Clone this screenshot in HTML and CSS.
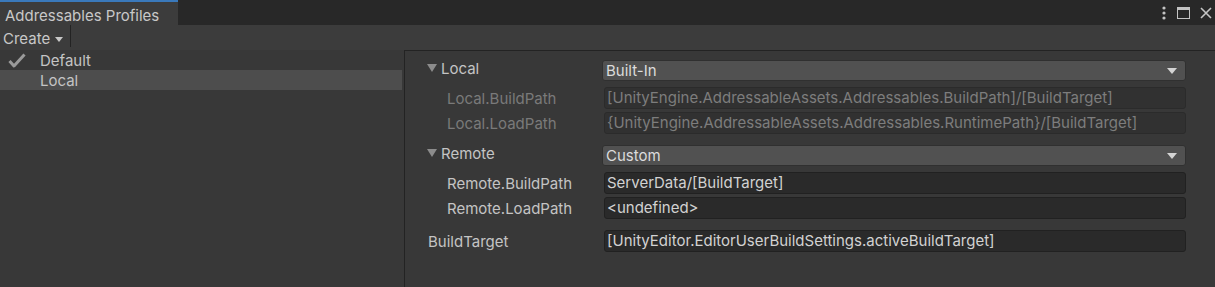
FILE: index.html
```html
<!DOCTYPE html>
<html lang="en">
<head>
    <meta charset="UTF-8">
    <title>Addressables Profiles</title>
    <link rel="stylesheet" href="styles.css">
</head>
<body>
    <div class="tabbar">
        <div class="tab">Addressables Profiles</div>
        <div class="window-icons">
            <svg width="6" height="14" viewBox="0 0 6 14"><circle cx="3" cy="2" r="1.6" fill="#c4c4c4"/><circle cx="3" cy="7" r="1.6" fill="#c4c4c4"/><circle cx="3" cy="12" r="1.6" fill="#c4c4c4"/></svg>
            <svg width="13" height="12" viewBox="0 0 13 12"><rect x="0.5" y="0.5" width="12" height="11" fill="none" stroke="#c4c4c4"/><rect x="0" y="0" width="13" height="3" fill="#c4c4c4"/></svg>
            <svg width="12" height="12" viewBox="0 0 12 12"><path d="M1 1 L11 11 M11 1 L1 11" stroke="#c4c4c4" stroke-width="1.6"/></svg>
        </div>
    </div>

    <div class="toolbar">
        <div class="create">Create <span class="caret"></span></div>
    </div>

    <div class="main">
        <div class="list">
            <div class="list-row">
                <svg class="check" width="18" height="15" viewBox="0 0 18 15"><path d="M1.5 8 L6 13 L16.5 1.5" fill="none" stroke="#9a9a9a" stroke-width="3" stroke-linejoin="round"/></svg>
                Default
            </div>
            <div class="list-row selected">Local</div>
        </div>

        <div class="inspector">
            <div class="row header">
                <div class="label"><span class="fold"></span>Local</div>
                <div class="dropdown">Built-In<span class="arrow"></span></div>
            </div>
            <div class="row child disabled">
                <div class="label">Local.BuildPath</div>
                <div class="field">[UnityEngine.AddressableAssets.Addressables.BuildPath]/[BuildTarget]</div>
            </div>
            <div class="row child disabled last">
                <div class="label">Local.LoadPath</div>
                <div class="field">{UnityEngine.AddressableAssets.Addressables.RuntimePath}/[BuildTarget]</div>
            </div>

            <div class="row header">
                <div class="label"><span class="fold"></span>Remote</div>
                <div class="dropdown">Custom<span class="arrow"></span></div>
            </div>
            <div class="row child">
                <div class="label">Remote.BuildPath</div>
                <div class="field">ServerData/[BuildTarget]</div>
            </div>
            <div class="row child last">
                <div class="label">Remote.LoadPath</div>
                <div class="field">&lt;undefined&gt;</div>
            </div>

            <div class="row variable">
                <div class="label">BuildTarget</div>
                <div class="field">[UnityEditor.EditorUserBuildSettings.activeBuildTarget]</div>
            </div>
        </div>
    </div>
</body>
</html>
```

FILE: styles.css
```css
body {
    margin: 0;
    padding: 0;
    background-color: #383838;
    font-family: Inter, "Noto Sans", sans-serif;
    font-size: 15px;
    color: #c4c4c4;
    height: 287px;
    overflow: hidden;
    display: flex;
    flex-direction: column;
}

.tabbar {
    height: 25px;
    background-color: #282828;
    display: flex;
    justify-content: space-between;
    align-items: stretch;
}

.tab {
    width: 178px;
    box-sizing: border-box;
    background-color: #3c3c3c;
    border-top: 2px solid #3a79bb;
    padding: 4px 0 0 5px;
    color: #c8c8c8;
}

.window-icons {
    display: flex;
    align-items: center;
    gap: 10px;
    padding-right: 3px;
}

.toolbar {
    height: 25px;
    background-color: #3c3c3c;
    display: flex;
}

.create {
    width: 71px;
    box-sizing: border-box;
    padding: 4px 0 0 3px;
    border-right: 1px solid #232323;
    margin: 0 0 3px 0;
    color: #c8c8c8;
}

.caret {
    display: inline-block;
    border-left: 4px solid transparent;
    border-right: 4px solid transparent;
    border-top: 5px solid #c8c8c8;
    vertical-align: middle;
    margin-left: 1px;
}

.main {
    flex: 1;
    display: flex;
}

.list {
    width: 402px;
}

.list-row {
    height: 20px;
    line-height: 21px;
    padding-left: 40px;
    position: relative;
}

.list-row.selected {
    background-color: #4d4d4d;
}

.check {
    position: absolute;
    left: 8px;
    top: 3px;
}

.inspector {
    flex: 1;
    margin-left: 2px;
    border-left: 1px solid #232323;
    border-top: 1px solid #232323;
    padding: 9px 29px 0 22px;
}

.row {
    display: grid;
    grid-template-columns: 175px 1fr;
    align-items: center;
}

.label {
    white-space: nowrap;
}

.header {
    height: 21px;
    margin-bottom: 6px;
}

.header .label {
    padding-left: 14px;
    position: relative;
    margin-top: -4px;
}

.fold {
    position: absolute;
    left: 0;
    top: 5px;
    border-left: 5px solid transparent;
    border-right: 5px solid transparent;
    border-top: 8px solid #8c8c8c;
}

.child {
    height: 22px;
    margin-bottom: 3px;
}

.child .label {
    padding-left: 20px;
}

.child.last {
    margin-bottom: 11px;
}

.variable {
    height: 22px;
}

.variable .label {
    padding-left: 1px;
}

.dropdown {
    height: 21px;
    box-sizing: border-box;
    background-color: #515151;
    border: 1px solid #303030;
    border-radius: 3px;
    padding-left: 3px;
    line-height: 19px;
    color: #dcdcdc;
    position: relative;
}

.arrow {
    position: absolute;
    right: 8px;
    top: 7px;
    border-left: 5px solid transparent;
    border-right: 5px solid transparent;
    border-top: 6px solid #d4d4d4;
}

.field {
    height: 22px;
    box-sizing: border-box;
    margin-left: 2px;
    background-color: #2a2a2a;
    border: 1px solid #212121;
    border-radius: 3px;
    padding-left: 2px;
    line-height: 20px;
    color: #d2d2d2;
    white-space: nowrap;
    overflow: hidden;
}

.disabled .label {
    color: #7a7a7a;
}

.disabled .field {
    background-color: #313131;
    border-color: #2b2b2b;
    color: #7d7d7d;
}
```
